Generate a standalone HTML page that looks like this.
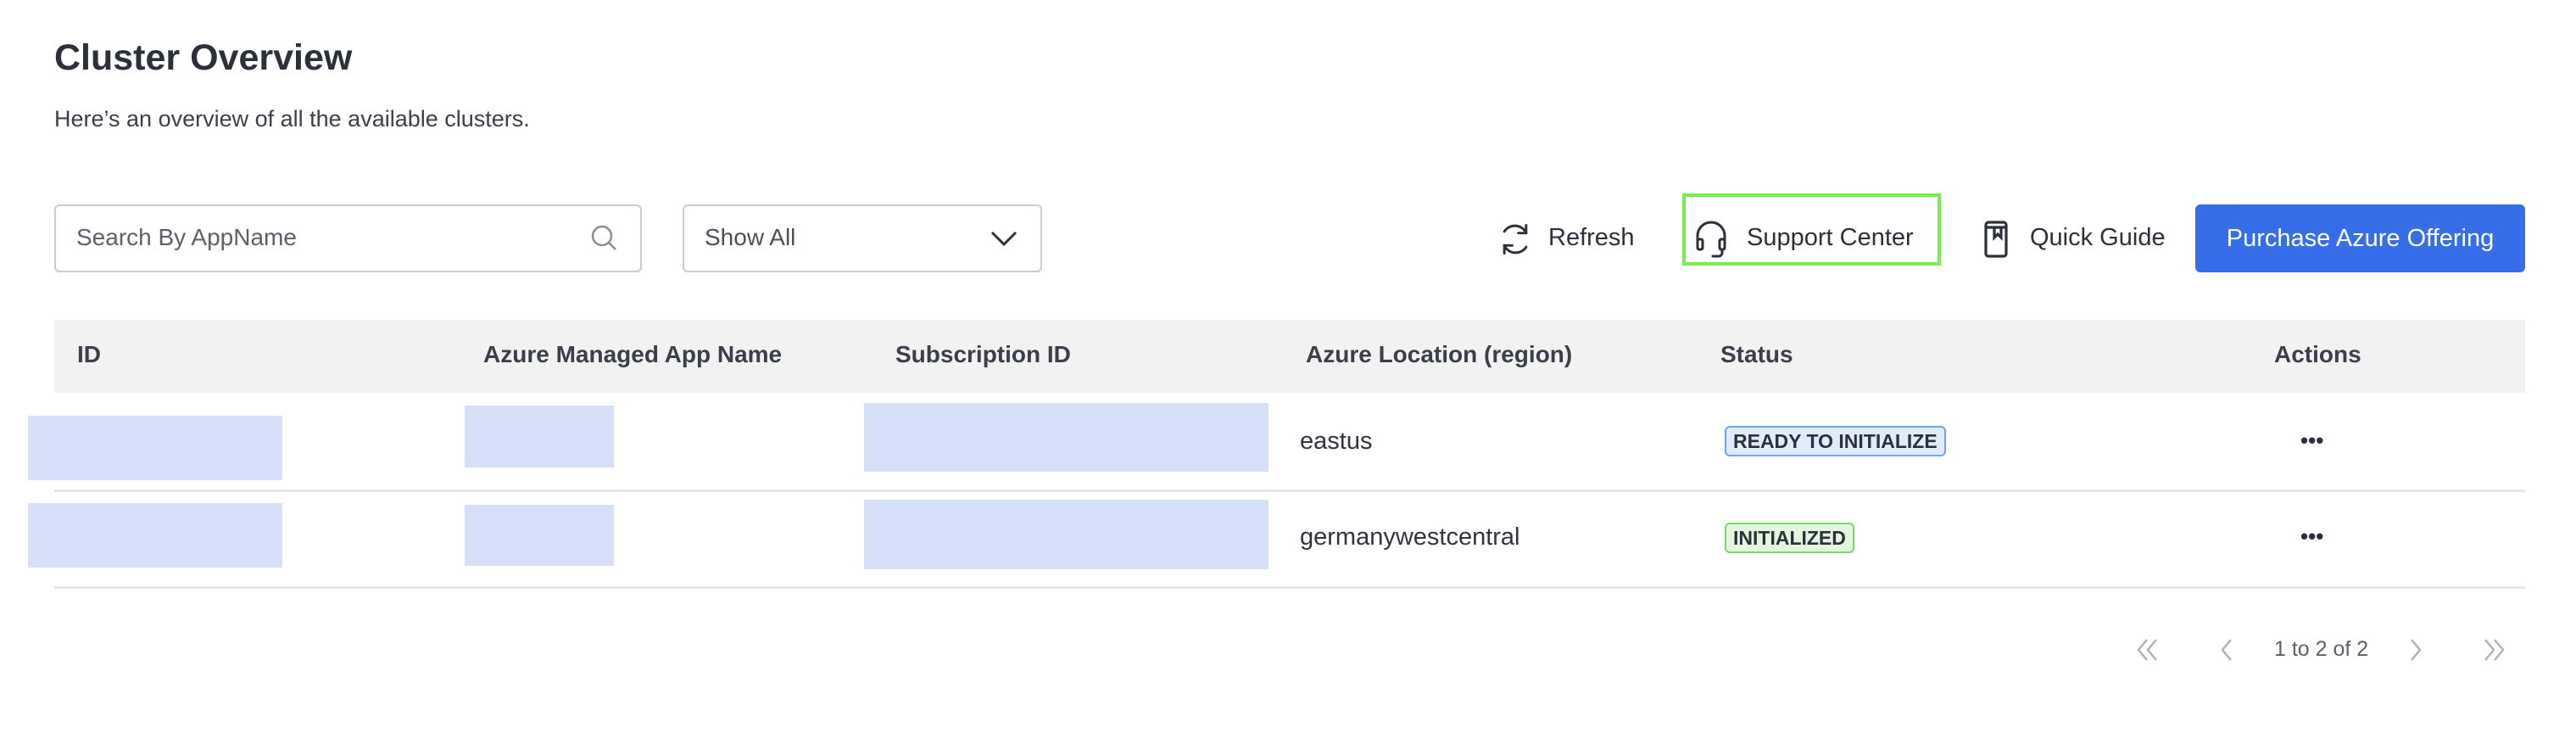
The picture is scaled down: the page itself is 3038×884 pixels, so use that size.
<!DOCTYPE html>
<html><head><meta charset="utf-8"><style>
*{box-sizing:border-box;margin:0;padding:0}
body{width:3038px;height:884px;background:#fff;font-family:"Liberation Sans",sans-serif;color:#2b303b;position:relative;overflow:hidden}
.a{position:absolute;white-space:nowrap}
.blk{position:absolute;background:#d6e1f9}
.hd{font-weight:bold;font-size:28px;color:#3a3f4a;top:402px}
.cell{font-size:29px;color:#2f3440}
.badge{position:absolute;height:36px;border:2px solid;border-radius:6px;font-size:23px;font-weight:bold;line-height:32px;padding:0 8px;color:#2b303b}
.dots{position:absolute;font-size:26px;font-weight:bold;letter-spacing:0px;color:#2b303b}
</style></head><body>
<div class="a" style="left:64px;top:44px;font-size:43px;font-weight:bold;color:#2b303b">Cluster Overview</div>
<div class="a" style="left:64px;top:125px;font-size:27px;color:#3a3f4a">Here’s an overview of all the available clusters.</div>

<div class="a" style="left:64px;top:241px;width:693px;height:80px;border:2px solid #c9cbd0;border-radius:6px"></div>
<div class="a" style="left:90px;top:264px;font-size:28px;color:#5b606b">Search By AppName</div>
<svg class="a" style="left:693px;top:261px" width="40" height="40" viewBox="0 0 40 40"><circle cx="17" cy="17" r="11" fill="none" stroke="#8a8e96" stroke-width="2.5"/><line x1="25" y1="25" x2="33" y2="33" stroke="#8a8e96" stroke-width="2.5"/></svg>

<div class="a" style="left:805px;top:241px;width:424px;height:80px;border:2px solid #c9cbd0;border-radius:6px"></div>
<div class="a" style="left:831px;top:264px;font-size:28px;color:#4a4f5a">Show All</div>
<svg class="a" style="left:1167px;top:270px" width="34" height="22" viewBox="0 0 34 22"><polyline points="3,4 17,18 31,4" fill="none" stroke="#2b303b" stroke-width="3"/></svg>

<svg class="a" style="left:1765px;top:260px" width="44" height="44" viewBox="0 0 24 24" fill="none" stroke="#2b303b" stroke-width="1.6" stroke-linecap="round"><path d="M19 8A8 8 0 0 0 5 7"/><path d="M19 3v5h-5"/><path d="M5 16a8 8 0 0 0 14 1"/><path d="M5 21v-5h5"/></svg>
<div class="a" style="left:1826px;top:264px;font-size:29px;color:#2b303b">Refresh</div>

<div class="a" style="left:1984px;top:228px;width:305px;height:85px;border:4px solid #77ee4c"></div>
<svg class="a" style="left:1998px;top:258px" width="40" height="48" viewBox="0 0 20 24" fill="none" stroke="#2b303b" stroke-width="1.5" stroke-linecap="round"><path d="M2 14V10a8 8 0 0 1 16 0v4"/><rect x="2" y="12" width="3" height="6" rx="1"/><rect x="15" y="12" width="3" height="6" rx="1"/><path d="M16.5 18v2a2 2 0 0 1-2 2H11"/></svg>
<div class="a" style="left:2060px;top:264px;font-size:29px;color:#2b303b">Support Center</div>

<svg class="a" style="left:2340px;top:258px" width="30" height="46" viewBox="0 0 15 23" fill="none" stroke="#2b303b" stroke-width="1.6"><rect x="1" y="2" width="12" height="20" rx="1.5"/><path d="M1 5h12"/><path d="M6 5v6l2-2 2 2V5"/></svg>
<div class="a" style="left:2394px;top:264px;font-size:29px;color:#2b303b">Quick Guide</div>

<div class="a" style="left:2589px;top:241px;width:389px;height:80px;background:#366de8;border-radius:6px;color:#fff;font-size:29px;text-align:center;line-height:80px">Purchase Azure Offering</div>

<div class="a" style="left:64px;top:377px;width:2914px;height:86px;background:#f2f2f2"></div>
<div class="a hd" style="left:91px">ID</div>
<div class="a hd" style="left:570px">Azure Managed App Name</div>
<div class="a hd" style="left:1056px">Subscription ID</div>
<div class="a hd" style="left:1540px">Azure Location (region)</div>
<div class="a hd" style="left:2029px">Status</div>
<div class="a hd" style="left:2682px">Actions</div>

<div class="a" style="left:64px;top:577px;width:2914px;height:3px;background:#e6e6e6"></div>
<div class="a" style="left:64px;top:691px;width:2914px;height:3px;background:#e6e6e6"></div>

<div class="blk" style="left:33px;top:490px;width:300px;height:76px"></div>
<div class="blk" style="left:548px;top:478px;width:176px;height:73px"></div>
<div class="blk" style="left:1019px;top:475px;width:477px;height:81px"></div>
<div class="blk" style="left:33px;top:593px;width:300px;height:76px"></div>
<div class="blk" style="left:548px;top:595px;width:176px;height:72px"></div>
<div class="blk" style="left:1019px;top:589px;width:477px;height:82px"></div>

<div class="a cell" style="left:1533px;top:504px">eastus</div>
<div class="a cell" style="left:1533px;top:617px">germanywestcentral</div>

<div class="badge" style="left:2034px;top:502px;background:#e0ecfd;border-color:#6ea4f4">READY TO INITIALIZE</div>
<div class="badge" style="left:2034px;top:616px;background:#e4f7de;border-color:#79d96a">INITIALIZED</div>

<div class="dots" style="left:2713px;top:504px">•••</div>
<div class="dots" style="left:2713px;top:617px">•••</div>

<svg class="a" style="left:2518px;top:752px" width="36" height="28" viewBox="0 0 36 28" fill="none" stroke="#b0b2b8" stroke-width="2.5"><polyline points="14,2 4,14 14,26"/><polyline points="25,2 15,14 25,26"/></svg>
<svg class="a" style="left:2615px;top:752px" width="24" height="28" viewBox="0 0 24 28" fill="none" stroke="#b0b2b8" stroke-width="2.5"><polyline points="16,2 6,14 16,26"/></svg>
<div class="a" style="left:2682px;top:751px;font-size:25px;color:#5d616b">1 to 2 of 2</div>
<svg class="a" style="left:2838px;top:752px" width="24" height="28" viewBox="0 0 24 28" fill="none" stroke="#b0b2b8" stroke-width="2.5"><polyline points="6,2 16,14 6,26"/></svg>
<svg class="a" style="left:2921px;top:752px" width="36" height="28" viewBox="0 0 36 28" fill="none" stroke="#b0b2b8" stroke-width="2.5"><polyline points="10,2 20,14 10,26"/><polyline points="21,2 31,14 21,26"/></svg>
</body></html>
